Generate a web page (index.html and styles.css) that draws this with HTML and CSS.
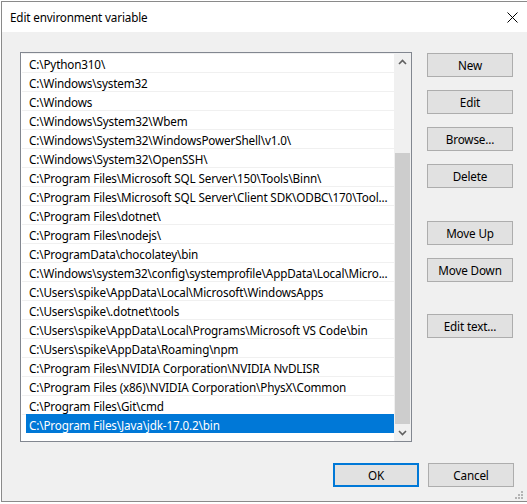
FILE: index.html
```html
<!DOCTYPE html>
<html>
<head>
<meta charset="utf-8">
<link rel="stylesheet" href="styles.css">
</head>
<body>
<div class="window">
  <div class="titlebar">
    <span class="title">Edit environment variable</span>
    <span class="close"><svg width="11" height="11" viewBox="0 0 11 11"><path d="M0.5 0.5L10.5 10.5M10.5 0.5L0.5 10.5" stroke="#000" stroke-width="1" fill="none"/></svg></span>
  </div>
  <div class="content">
    <div class="main">
      <div class="listbox">
        <div class="items">
          <div class="row"><span class="cell">C:\Python310\</span></div>
          <div class="row"><span class="cell">C:\Windows\system32</span></div>
          <div class="row"><span class="cell">C:\Windows</span></div>
          <div class="row"><span class="cell">C:\Windows\System32\Wbem</span></div>
          <div class="row"><span class="cell">C:\Windows\System32\WindowsPowerShell\v1.0\</span></div>
          <div class="row"><span class="cell">C:\Windows\System32\OpenSSH\</span></div>
          <div class="row"><span class="cell">C:\Program Files\Microsoft SQL Server\150\Tools\Binn\</span></div>
          <div class="row"><span class="cell">C:\Program Files\Microsoft SQL Server\Client SDK\ODBC\170\Tool...</span></div>
          <div class="row"><span class="cell">C:\Program Files\dotnet\</span></div>
          <div class="row"><span class="cell">C:\Program Files\nodejs\</span></div>
          <div class="row"><span class="cell">C:\ProgramData\chocolatey\bin</span></div>
          <div class="row"><span class="cell">C:\Windows\system32\config\systemprofile\AppData\Local\Micro...</span></div>
          <div class="row"><span class="cell">C:\Users\spike\AppData\Local\Microsoft\WindowsApps</span></div>
          <div class="row"><span class="cell">C:\Users\spike\.dotnet\tools</span></div>
          <div class="row"><span class="cell">C:\Users\spike\AppData\Local\Programs\Microsoft VS Code\bin</span></div>
          <div class="row"><span class="cell">C:\Users\spike\AppData\Roaming\npm</span></div>
          <div class="row"><span class="cell">C:\Program Files\NVIDIA Corporation\NVIDIA NvDLISR</span></div>
          <div class="row"><span class="cell">C:\Program Files (x86)\NVIDIA Corporation\PhysX\Common</span></div>
          <div class="row"><span class="cell">C:\Program Files\Git\cmd</span></div>
          <div class="row selected"><span class="cell">C:\Program Files\Java\jdk-17.0.2\bin</span></div>
        </div>
        <div class="scrollbar">
          <div class="arrow"><svg width="9" height="6" viewBox="0 0 9 6"><path d="M1 5L4.5 1.5L8 5" stroke="#606060" stroke-width="1.6" fill="none"/></svg></div>
          <div class="track"><div class="thumb"></div></div>
          <div class="arrow"><svg width="9" height="6" viewBox="0 0 9 6"><path d="M1 1L4.5 4.5L8 1" stroke="#606060" stroke-width="1.6" fill="none"/></svg></div>
        </div>
      </div>
      <div class="buttons">
        <button class="btn">New</button>
        <button class="btn">Edit</button>
        <button class="btn">Browse...</button>
        <button class="btn">Delete</button>
        <button class="btn group">Move Up</button>
        <button class="btn">Move Down</button>
        <button class="btn group2">Edit text...</button>
      </div>
    </div>
    <div class="footer">
      <button class="btn default">OK</button>
      <button class="btn">Cancel</button>
    </div>
  </div>
  <svg class="grip" width="10" height="10" viewBox="0 0 10 10">
    <rect x="7" y="1" width="2" height="2" fill="#b4b4b4"/>
    <rect x="4" y="4" width="2" height="2" fill="#b4b4b4"/>
    <rect x="7" y="4" width="2" height="2" fill="#b4b4b4"/>
    <rect x="1" y="7" width="2" height="2" fill="#b4b4b4"/>
    <rect x="4" y="7" width="2" height="2" fill="#b4b4b4"/>
    <rect x="7" y="7" width="2" height="2" fill="#b4b4b4"/>
  </svg>
</div>
</body>
</html>
```

FILE: styles.css
```css
html, body {
  margin: 0;
  padding: 0;
  overflow: hidden;
  background: #ffffff;
}

body {
  font-family: "Noto Sans", "Open Sans", "Liberation Sans", sans-serif;
  font-size: 11.7px;
  letter-spacing: -0.15px;
  color: #000;
}

.window {
  position: relative;
  margin: 1px 0 0 1px;
  width: 525px;
  height: 499px;
  border: 1px solid #8a8a8a;
  background: #f0f0f0;
}

.titlebar {
  height: 30px;
  background: #ffffff;
  display: flex;
  align-items: center;
  justify-content: space-between;
  padding-left: 8px;
}

.title {
  line-height: 30px;
}

.close {
  width: 30px;
  height: 30px;
  display: flex;
  align-items: center;
  justify-content: center;
}

.close svg {
  display: block;
}

.content {
  padding: 20px 0 0 18px;
}

.main {
  display: flex;
  align-items: flex-start;
}

.listbox {
  width: 390px;
  height: 388px;
  border: 1px solid #828790;
  background: #ffffff;
  display: flex;
}

.items {
  flex: 1;
  min-width: 0;
}

.row {
  height: 19px;
  box-sizing: border-box;
  margin-left: 1px;
  padding-left: 4px;
  border-top: 1px solid #f0f0f0;
  display: flex;
}

.cell {
  flex: 1;
  min-width: 0;
  padding-top: 3px;
  padding-left: 3px;
  line-height: 15px;
  white-space: nowrap;
  overflow: hidden;
}

.row.selected .cell {
  margin-top: -1px;
  padding-top: 4px;
  background: #0078d7;
  color: #ffffff;
}

.scrollbar {
  width: 17px;
  display: flex;
  flex-direction: column;
  background: #f0f0f0;
}

.arrow {
  height: 17px;
  display: flex;
  align-items: center;
  justify-content: center;
}

.arrow svg {
  display: block;
}

.track {
  flex: 1;
  display: flex;
  flex-direction: column;
  justify-content: flex-end;
}

.thumb {
  height: 271px;
  margin: 0 1px;
  background: #cdcdcd;
}

.buttons {
  margin-left: 15px;
  padding-top: 1px;
  display: flex;
  flex-direction: column;
}

.btn {
  width: 86px;
  height: 24px;
  box-sizing: border-box;
  border: 1px solid #adadad;
  background: #e1e1e1;
  font-family: inherit;
  font-size: 11.7px;
  letter-spacing: -0.15px;
  color: #000;
  padding: 0;
  margin: 0;
}

.buttons .btn + .btn {
  margin-top: 13px;
}

.buttons .btn.group {
  margin-top: 33px;
}

.buttons .btn.group2 {
  margin-top: 32px;
}

.footer {
  display: flex;
  gap: 9px;
  margin-top: 21px;
  padding-left: 313px;
}

.btn.default {
  border: 2px solid #0078d7;
}

.grip {
  position: absolute;
  right: 3px;
  bottom: 1px;
}
```
